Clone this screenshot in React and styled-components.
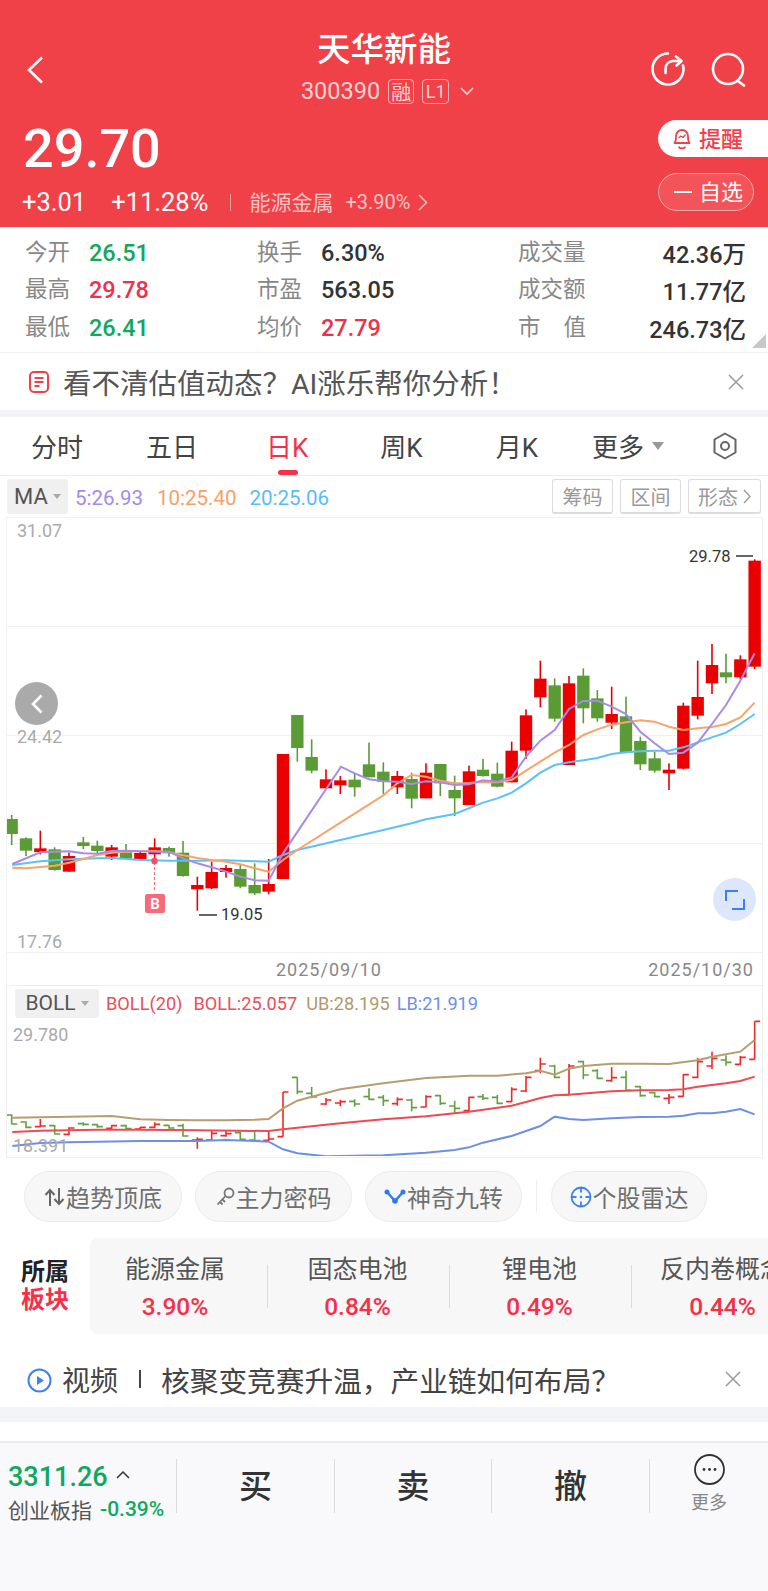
import React from 'react';
import styled, { createGlobalStyle } from 'styled-components';

const GlobalStyle = createGlobalStyle`
  html, body { margin: 0; padding: 0; background: #fff; }
  body { font-family: Roboto, "Noto Sans CJK SC", sans-serif; }
`;

// chart data is in the coordinates of the two half-width crops: x/3 (+384 on the right half), base + y/3
const RED = '#ea0000';
const GREEN = '#5b9b36';

const leftCandles = [
  [35, 885, 897, 942, 975, 'g'], [78, 952, 955, 992, 1008, 'g'], [121, 932, 985, 996, 1003, 'r'],
  [164, 982, 988, 1050, 1052, 'g'], [207, 998, 1008, 1055, 1055, 'r'], [250, 951, 967, 978, 987, 'g'],
  [292, 962, 977, 993, 1002, 'g'], [335, 975, 982, 1010, 1020, 'r'], [378, 972, 997, 1016, 1020, 'g'],
  [421, 993, 999, 1017, 1018, 'r'], [464, 955, 982, 1003, 1015, 'r'], [507, 980, 984, 1000, 1010, 'g'],
  [549, 963, 998, 1068, 1070, 'g'], [592, 1070, 1095, 1108, 1172, 'r'], [635, 1025, 1056, 1105, 1107, 'r'],
  [678, 1035, 1044, 1056, 1073, 'r'], [721, 1035, 1047, 1100, 1105, 'g'], [764, 1030, 1095, 1120, 1125, 'g'],
  [806, 1017, 1092, 1115, 1123, 'r'], [849, 702, 702, 1077, 1077, 'r'], [892, 585, 585, 684, 725, 'g'],
  [935, 658, 711, 752, 760, 'g'], [978, 748, 778, 805, 805, 'r'], [1021, 768, 781, 796, 822, 'r'],
  [1064, 760, 779, 802, 830, 'g'], [1107, 668, 733, 772, 772, 'g'], [1150, 727, 755, 785, 823, 'g'],
];

const rightCandles = [
  [40, 753, 768, 802, 822, 'r'], [83, 758, 777, 836, 865, 'g'], [126, 730, 758, 835, 835, 'r'],
  [169, 732, 732, 790, 828, 'g'], [212, 767, 810, 835, 888, 'g'], [255, 737, 754, 855, 855, 'r'],
  [297, 717, 749, 768, 770, 'g'], [340, 728, 761, 800, 802, 'g'], [383, 665, 692, 787, 787, 'r'],
  [426, 568, 586, 692, 717, 'r'], [469, 422, 476, 532, 562, 'r'], [512, 475, 496, 596, 605, 'g'],
  [555, 468, 490, 735, 735, 'r'], [598, 445, 467, 565, 610, 'g'], [640, 510, 535, 595, 605, 'g'],
  [683, 500, 582, 608, 627, 'r'], [726, 530, 589, 697, 697, 'g'], [769, 650, 663, 733, 750, 'g'],
  [812, 695, 715, 752, 758, 'g'], [855, 730, 749, 760, 810, 'r'], [898, 548, 557, 746, 748, 'r'],
  [941, 422, 531, 587, 598, 'r'], [984, 372, 435, 490, 522, 'r'], [1026, 401, 457, 472, 490, 'g'],
  [1069, 406, 418, 472, 478, 'r'], [1112, 118, 122, 440, 447, 'r'],
];

const ma5 = [
  [[37, 1032], [121, 997], [207, 994], [250, 1000], [292, 1001], [335, 993], [378, 992], [421, 994], [464, 995], [507, 995], [549, 1015], [592, 1030], [635, 1042], [678, 1055], [721, 1070], [764, 1081], [806, 1082], [849, 1000], [1023, 740], [1064, 760], [1107, 778], [1150, 784]],
  [[40, 785], [83, 792], [126, 784], [169, 787], [212, 795], [255, 793], [297, 781], [340, 785], [383, 772], [426, 710], [469, 662], [512, 630], [555, 567], [598, 543], [640, 542], [683, 560], [726, 582], [769, 635], [812, 670], [855, 702], [898, 698], [941, 668], [984, 612], [1026, 555], [1069, 482], [1112, 400]],
];
const ma10 = [
  [[37, 1043], [78, 1045], [121, 1041], [164, 1037], [207, 1028], [250, 1017], [292, 1005], [335, 998], [378, 995], [421, 993], [464, 993], [507, 997], [549, 1006], [592, 1014], [635, 1020], [678, 1025], [721, 1033], [764, 1045], [806, 1055], [849, 1020], [892, 990], [1021, 908], [1150, 826]],
  [[40, 790], [83, 765], [126, 770], [169, 782], [212, 790], [255, 789], [297, 786], [340, 787], [383, 780], [426, 752], [469, 725], [512, 698], [555, 675], [598, 645], [640, 628], [683, 614], [726, 607], [769, 601], [812, 605], [855, 620], [898, 630], [941, 625], [984, 621], [1026, 612], [1069, 592], [1112, 548]],
];
const ma20 = [
  [[37, 1035], [121, 1024], [207, 1018], [292, 1015], [335, 1014], [421, 1020], [507, 1022], [592, 1022], [678, 1021], [764, 1024], [806, 1025], [849, 1005], [892, 990], [1021, 960], [1150, 930]],
  [[83, 910], [126, 898], [212, 882], [297, 848], [340, 835], [383, 818], [426, 790], [469, 758], [512, 735], [555, 727], [598, 721], [640, 714], [683, 702], [726, 697], [769, 694], [812, 692], [855, 692], [898, 682], [941, 667], [984, 652], [1026, 638], [1069, 612], [1112, 582]],
];

const leftBars = [
  [35, 403, 433, 405, 432, 'g'], [78, 424, 445, 426, 442, 'g'], [121, 417, 442, 440, 438, 'r'], [164, 435, 463, 437, 462, 'g'],
  [207, 442, 465, 463, 444, 'r'], [250, 427, 437, 431, 433, 'g'], [292, 431, 443, 434, 440, 'g'], [335, 435, 447, 445, 437, 'r'],
  [378, 434, 448, 437, 446, 'g'], [421, 441, 449, 447, 442, 'r'], [464, 427, 445, 442, 433, 'r'], [507, 435, 446, 436, 444, 'g'],
  [549, 431, 470, 437, 468, 'g'], [592, 472, 506, 480, 478, 'r'], [635, 452, 481, 480, 460, 'r'], [678, 452, 470, 467, 461, 'r'],
  [721, 455, 480, 458, 478, 'g'], [764, 452, 483, 480, 482, 'g'], [806, 450, 483, 481, 477, 'r'], [849, 336, 470, 470, 336, 'r'],
  [892, 292, 342, 292, 335, 'g'], [935, 321, 355, 340, 351, 'g'], [978, 354, 375, 372, 360, 'r'], [1021, 359, 379, 369, 365, 'r'],
  [1064, 358, 380, 364, 372, 'g'], [1107, 325, 360, 350, 358, 'g'], [1150, 345, 378, 352, 362, 'g'],
];
const rightBars = [
  [40, 352, 377, 371, 358, 'r'], [83, 356, 394, 360, 383, 'g'], [126, 346, 382, 381, 350, 'r'], [169, 345, 375, 347, 370, 'g'],
  [212, 362, 398, 378, 385, 'g'], [255, 350, 395, 392, 352, 'r'], [297, 342, 360, 350, 355, 'g'], [340, 345, 372, 352, 370, 'g'],
  [383, 322, 366, 365, 328, 'r'], [426, 288, 337, 333, 292, 'r'], [469, 233, 280, 272, 252, 'r'], [512, 254, 295, 258, 292, 'g'],
  [555, 252, 345, 344, 258, 'r'], [598, 242, 298, 245, 285, 'g'], [640, 268, 298, 272, 295, 'g'], [683, 262, 305, 302, 293, 'r'],
  [726, 272, 332, 292, 331, 'g'], [769, 318, 350, 320, 347, 'g'], [812, 335, 352, 338, 350, 'g'], [855, 342, 372, 355, 352, 'r'],
  [898, 282, 350, 349, 284, 'r'], [941, 234, 295, 292, 245, 'r'], [984, 215, 267, 258, 235, 'r'], [1026, 226, 257, 240, 247, 'g'],
  [1069, 228, 256, 253, 232, 'r'], [1112, 124, 238, 238, 124, 'r'],
];

const ub = [
  [[37, 413], [121, 412], [207, 410], [335, 408], [421, 418], [507, 420], [592, 421], [678, 421], [764, 419], [806, 417], [849, 385], [892, 362], [935, 350], [1021, 328], [1150, 310]],
  [[126, 294], [255, 287], [340, 287], [426, 280], [469, 272], [512, 284], [555, 266], [598, 258], [683, 251], [769, 251], [855, 252], [941, 241], [984, 230], [1069, 215], [1112, 180]],
];
const mid = [
  [[37, 456], [121, 452], [292, 449], [421, 449], [592, 451], [806, 453], [849, 448], [1021, 430], [1150, 418]],
  [[126, 409], [255, 395], [383, 377], [426, 366], [469, 354], [512, 346], [555, 344], [683, 334], [769, 331], [855, 330], [898, 328], [941, 320], [1026, 310], [1069, 303], [1112, 290]],
];
const lb = [
  [[37, 498], [121, 489], [207, 487], [421, 483], [592, 483], [678, 480], [764, 483], [806, 485], [849, 508], [892, 520], [978, 529], [1150, 526]],
  [[126, 518], [212, 510], [255, 502], [297, 488], [383, 468], [469, 438], [512, 410], [555, 417], [598, 420], [683, 415], [769, 411], [855, 410], [898, 407], [941, 400], [984, 400], [1026, 395], [1069, 387], [1112, 403]],
];

const linePoints = ([left, right], base) =>
  [...left.map(([x, y]) => [x / 3, base + y / 3]), ...right.map(([x, y]) => [384 + x / 3, base + y / 3])]
    .map((p) => p.join(','))
    .join(' ');

const Candles = ({ data, offset }) =>
  data.map(([x, hi, top, bottom, lo, c]) => {
    const cx = offset + x / 3;
    return (
      <g key={x} fill={c === 'r' ? RED : GREEN}>
        <rect x={cx - 0.8} y={520 + hi / 3} width="1.6" height={(lo - hi) / 3} />
        <rect x={cx - 6.2} y={520 + top / 3} width="12.4" height={Math.max((bottom - top) / 3, 2)} />
      </g>
    );
  });

const Bars = ({ data, offset }) =>
  data.map(([x, hi, lo, open, close, c]) => {
    const cx = offset + x / 3;
    const y = (v) => 980 + v / 3;
    return (
      <path
        key={x}
        d={`M${cx} ${y(hi)}V${y(lo)}M${cx - 5.5} ${y(open)}H${cx}M${cx} ${y(close)}H${cx + 5.5}`}
        stroke={c === 'r' ? '#ee2a2a' : '#62a040'}
        strokeWidth="1.6"
        fill="none"
      />
    );
  });

const stats = [
  [
    { label: '今开', value: '26.51', color: '#10a860' },
    { label: '换手', value: '6.30%', color: '#333' },
    { label: '成交量', value: '42.36万', color: '#333' },
  ],
  [
    { label: '最高', value: '29.78', color: '#f0304a' },
    { label: '市盈', value: '563.05', color: '#333' },
    { label: '成交额', value: '11.77亿', color: '#333' },
  ],
  [
    { label: '最低', value: '26.41', color: '#10a860' },
    { label: '均价', value: '27.79', color: '#f0304a' },
    { label: ['市', '值'], value: '246.73亿', color: '#333' },
  ],
];

const sectors = [
  { name: '能源金属', pct: '3.90%', width: 177, pad: 7 },
  { name: '固态电池', pct: '0.84%', width: 181, pad: 2 },
  { name: '锂电池', pct: '0.49%', width: 181, pad: 2 },
  { name: '反内卷概念', pct: '0.44%', width: 181, pad: 0 },
];

const tabs = [
  { label: '分时', gap: 63 },
  { label: '五日', gap: 68 },
  { label: '日K', gap: 72, active: true },
  { label: '周K', gap: 73 },
  { label: '月K', gap: 54 },
  { label: '更多', gap: 8 },
];

const CloseIcon = () => (
  <svg width="16" height="16" viewBox="0 0 16 16" fill="none" stroke="#9a9a9a" strokeWidth="1.5">
    <path d="M1 1l14 14M15 1L1 15" />
  </svg>
);

const App = () => {
  return (
    <Page>
      <GlobalStyle />
      <Header>
        <Nav>
          <NavSide>
            <svg width="18" height="28" viewBox="0 0 18 28" fill="none" stroke="#fff" strokeWidth="2.6">
              <path d="M16 1.5L3 14l13 12.5" />
            </svg>
          </NavSide>
          <TitleBlock>
            <Title>天华新能</Title>
            <CodeRow>
              <Code>300390</Code>
              <CodeBadge $w={26} $size={20}>融</CodeBadge>
              <CodeBadge $w={27} $size={18}>L1</CodeBadge>
              <svg width="14" height="9" viewBox="0 0 14 9" fill="none" stroke="#fbd3d3" strokeWidth="1.6">
                <path d="M1 1l6 6 6-6" />
              </svg>
            </CodeRow>
          </TitleBlock>
          <NavIcons>
            <svg width="35" height="35" viewBox="0 0 35 35" fill="none" stroke="#fff" strokeWidth="2.6" strokeLinecap="round" strokeLinejoin="round">
              <path d="M18 1.5A15.5 15.5 0 1 0 33.5 17c0-1.5-.2-2.5-.5-3.5" />
              <path d="M15.5 21v-4c0-4.5 3-7.5 7-8h8.5" />
              <path d="M26 4.5l5.5 4.5-5 4.5" />
            </svg>
            <svg width="35" height="35" viewBox="0 0 35 35" fill="none" stroke="#fff" strokeWidth="2.6" strokeLinecap="round">
              <circle cx="17" cy="17" r="15" />
              <path d="M27.5 29.5l5.5 4" />
            </svg>
          </NavIcons>
        </Nav>
        <Quote>
          <div>
            <Price>29.70</Price>
            <ChangeRow>
              <Change $gap={25}>+3.01</Change>
              <Change $gap={22}>+11.28%</Change>
              <ChangeDivider />
              <SectorName>能源金属</SectorName>
              <SectorChange>+3.90%</SectorChange>
              <svg width="10" height="17" viewBox="0 0 10 17" fill="none" stroke="#f9bcbc" strokeWidth="1.5">
                <path d="M1 1l7.5 7.5L1 16" />
              </svg>
            </ChangeRow>
          </div>
          <QuoteActions>
            <RemindButton>
              <svg width="18" height="21" viewBox="0 0 18 21" fill="none" stroke="#f0404a" strokeWidth="1.8" strokeLinejoin="round">
                <path d="M1.5 15c1.5-1.5 1.5-3 1.5-7a6 6 0 0 1 12 0c0 4 0 5.5 1.5 7z" />
                <path d="M6 18.5a3 2 0 0 0 6 0" />
                <path d="M5.5 10l2.5-2 2 1.5 2.5-3" strokeWidth="1.2" />
              </svg>
              <ActionText>提醒</ActionText>
            </RemindButton>
            <WatchButton>
              <WatchDash />
              <ActionText>自选</ActionText>
            </WatchButton>
          </QuoteActions>
        </Quote>
      </Header>

      <Stats>
        {stats.map((row, i) => (
          <StatRow key={i}>
            {row.map((cell, j) => (
              <StatCell key={j} $col={j}>
                <StatLabel $col={j}>
                  {Array.isArray(cell.label) ? cell.label.map((t) => <span key={t}>{t}</span>) : cell.label}
                </StatLabel>
                <StatValue $color={cell.color}>{cell.value}</StatValue>
              </StatCell>
            ))}
          </StatRow>
        ))}
        <CornerMark />
      </Stats>

      <Banner>
        <svg width="20" height="22" viewBox="0 0 20 22" fill="none" stroke="#f0404a" strokeWidth="2">
          <rect x="1" y="1" width="18" height="20" rx="4" />
          <path d="M5.5 7h9M5.5 11h9M5.5 15h5" />
        </svg>
        <BannerText>看不清估值动态？AI涨乐帮你分析！</BannerText>
        <CloseIcon />
      </Banner>
      <Band $h={7} />

      <Tabs>
        {tabs.map((t) => (
          <Tab key={t.label} $gap={t.gap} $active={t.active}>{t.label}</Tab>
        ))}
        <TabCaret />
        <svg width="26" height="28" viewBox="0 0 26 28" fill="none" stroke="#666" strokeWidth="2">
          <path d="M13 1.5l10.5 6v13L13 26.5l-10.5-6v-13z" strokeLinejoin="round" />
          <circle cx="13" cy="14" r="4" />
        </svg>
      </Tabs>

      <IndicatorRow>
        <IndicatorTag $w={61}>MA<TagCaret /></IndicatorTag>
        <MaValue $color="#a28bea" $gap={14}>5:26.93</MaValue>
        <MaValue $color="#f9a066" $gap={13}>10:25.40</MaValue>
        <MaValue $color="#55bdf8" $gap={0}>20:25.06</MaValue>
        <ToolGroup>
          <ToolButton $w={61}>筹码</ToolButton>
          <ToolButton $w={61}>区间</ToolButton>
          <ToolButton $w={73}>
            形态
            <svg width="8" height="15" viewBox="0 0 8 15" fill="none" stroke="#999" strokeWidth="1.3">
              <path d="M1 1l6 6.5-6 6.5" />
            </svg>
          </ToolButton>
        </ToolGroup>
      </IndicatorRow>

      <ChartFrame>
        <ChartArea>
          <ChartSvg width="755" height="436" viewBox="7 517 755 436">
            <path d="M7 517.5H762M7 626.5H762M7 735.5H762M7 843.5H762M7 952.5H762" stroke="#f1f1f1" strokeWidth="1.2" />
            <Candles data={leftCandles} offset={0} />
            <Candles data={rightCandles} offset={384} />
            <polyline points={linePoints(ma20, 520)} fill="none" stroke="#5cc1f7" strokeWidth="2" />
            <polyline points={linePoints(ma10, 520)} fill="none" stroke="#f9a46b" strokeWidth="2" />
            <polyline points={linePoints(ma5, 520)} fill="none" stroke="#a78bea" strokeWidth="2" />
            <path d="M154.5 862V892" stroke="#f8697a" strokeWidth="1.2" strokeDasharray="3 2" />
            <circle cx="154.5" cy="861" r="3.2" fill="#f0505f" />
            <path d="M199 915H217M736 556H753" stroke="#333" strokeWidth="1.6" />
          </ChartSvg>
          <AxisLabel $top={13}>31.07</AxisLabel>
          <AxisLabel $top={219}>24.42</AxisLabel>
          <AxisLabel $top={424}>17.76</AxisLabel>
          <PriceMark $left={214} $top={387}>19.05</PriceMark>
          <PriceMark $left={682} $top={29}>29.78</PriceMark>
          <TradeMark>B</TradeMark>
          <RoundButton $left={8} $top={165} $bg="#aaaaaa">
            <svg width="12" height="20" viewBox="0 0 12 20" fill="none" stroke="#fff" strokeWidth="2.6">
              <path d="M10.5 1.5L2 10l8.5 8.5" />
            </svg>
          </RoundButton>
          <RoundButton $left={706} $top={361} $bg="#dce7fb">
            <svg width="20" height="20" viewBox="0 0 20 20" fill="none" stroke="#3d7ff0" strokeWidth="2">
              <path d="M1 11V1h12M19 9v10H7" />
            </svg>
          </RoundButton>
        </ChartArea>
        <DateRow>
          <DateText>2025/09/10</DateText>
          <DateText>2025/10/30</DateText>
        </DateRow>
      </ChartFrame>

      <BollFrame>
        <BollHead>
          <IndicatorTag $w={84} $h={29} $size={21}>BOLL<TagCaret /></IndicatorTag>
          <BollValue $color="#e8505a" $gap={11}>BOLL(20)</BollValue>
          <BollValue $color="#e8505a" $gap={9}>BOLL:25.057</BollValue>
          <BollValue $color="#b3976d" $gap={7}>UB:28.195</BollValue>
          <BollValue $color="#6e8fe6" $gap={0}>LB:21.919</BollValue>
        </BollHead>
        <BollPlot>
          <ChartSvg width="755" height="138" viewBox="7 1018 755 138">
            <Bars data={leftBars} offset={0} />
            <Bars data={rightBars} offset={384} />
            <polyline points={linePoints(ub, 980)} fill="none" stroke="#b89c72" strokeWidth="2" />
            <polyline points={linePoints(mid, 980)} fill="none" stroke="#ee4a52" strokeWidth="2" />
            <polyline points={linePoints(lb, 980)} fill="none" stroke="#6e8fe6" strokeWidth="2" />
          </ChartSvg>
          <BollAxis $top={16}>29.780</BollAxis>
          <BollAxis $top={127}>18.391</BollAxis>
        </BollPlot>
      </BollFrame>

      <ChipRow>
        <Chip $w={158}>
          <svg width="21" height="18" viewBox="0 0 21 18" fill="none" stroke="#666" strokeWidth="2">
            <path d="M6 18V2M1.5 7L6 2l4.5 5M15 0v16M10.5 11l4.5 5 4.5-5" />
          </svg>
          趋势顶底
        </Chip>
        <Chip $w={157}>
          <svg width="19" height="19" viewBox="0 0 19 19" fill="none" stroke="#777" strokeWidth="1.8">
            <circle cx="13" cy="6" r="4.5" />
            <path d="M9.5 9L1.5 17.5M4 15l2.5 2.5M6.5 12.5L9 15" />
          </svg>
          主力密码
        </Chip>
        <Chip $w={157}>
          <svg width="22" height="15" viewBox="0 0 22 15" fill="none" stroke="#2f78ee" strokeWidth="2.4">
            <path d="M3 3l8 9 8-9" />
            <circle cx="3" cy="3" r="2.5" fill="#2f78ee" stroke="none" />
            <circle cx="19" cy="3" r="2.5" fill="#2f78ee" stroke="none" />
            <circle cx="11" cy="12" r="2.8" fill="#2f78ee" stroke="none" />
          </svg>
          神奇九转
        </Chip>
        <ChipDivider />
        <Chip $w={156}>
          <svg width="22" height="22" viewBox="0 0 22 22" fill="none" stroke="#3d82ef" strokeWidth="1.8">
            <circle cx="11" cy="11" r="9.5" />
            <path d="M11 1.5v5M11 15.5v5M1.5 11h5M15.5 11h5" />
            <circle cx="11" cy="11" r="1.3" fill="#3d82ef" stroke="none" />
          </svg>
          个股雷达
        </Chip>
      </ChipRow>

      <SectorRow>
        <SectorTitle>
          <span>所属</span>
          <SectorTitleRed>板块</SectorTitleRed>
        </SectorTitle>
        <SectorPanel>
          {sectors.map((s, i) => (
            <React.Fragment key={s.name}>
              {i > 0 && <SectorDivider />}
              <SectorItem $w={s.width} $pad={s.pad}>
                <SectorItemName>{s.name}</SectorItemName>
                <SectorItemPct>{s.pct}</SectorItemPct>
              </SectorItem>
            </React.Fragment>
          ))}
        </SectorPanel>
      </SectorRow>

      <NewsRow>
        <svg width="25" height="25" viewBox="0 0 25 25">
          <circle cx="12.5" cy="12.5" r="11" fill="none" stroke="#3d82ef" strokeWidth="2" />
          <path d="M10 8l7 4.5-7 4.5z" fill="#3d82ef" />
        </svg>
        <NewsLabel>视频</NewsLabel>
        <NewsBar />
        <NewsText>核聚变竞赛升温，产业链如何布局？</NewsText>
        <CloseIcon />
      </NewsRow>
      <Band $h={15} />
      <Spacer />

      <BottomBar>
        <IndexCell>
          <IndexLine>
            <IndexValue>3311.26</IndexValue>
            <svg width="14" height="9" viewBox="0 0 14 9" fill="none" stroke="#333" strokeWidth="1.5">
              <path d="M1 8l6-6 6 6" />
            </svg>
          </IndexLine>
          <IndexSubLine>
            <IndexName>创业板指</IndexName>
            <IndexChange>-0.39%</IndexChange>
          </IndexSubLine>
        </IndexCell>
        <TradeCell $w={158}>买</TradeCell>
        <TradeCell $w={157}>卖</TradeCell>
        <TradeCell $w={158}>撤</TradeCell>
        <MoreCell>
          <svg width="31" height="31" viewBox="0 0 31 31" fill="none">
            <circle cx="15.5" cy="15.5" r="14.5" stroke="#333" strokeWidth="1.8" />
            <circle cx="10" cy="15.5" r="1.4" fill="#333" />
            <circle cx="15.5" cy="15.5" r="1.4" fill="#333" />
            <circle cx="21" cy="15.5" r="1.4" fill="#333" />
          </svg>
          <MoreLabel>更多</MoreLabel>
        </MoreCell>
      </BottomBar>
    </Page>
  );
};

const Page = styled.div`
  width: 768px;
  height: 1591px;
  overflow: hidden;
  background: #fff;
  display: flex;
  flex-direction: column;
`;

const Header = styled.header`
  height: 227px;
  background: #f14148;
  color: #fff;
  flex: none;
`;
const Nav = styled.div`
  height: 104px;
  padding: 30px 24px 0 24px;
  box-sizing: border-box;
  display: grid;
  grid-template-columns: 1fr auto 1fr;
`;
const NavSide = styled.div`
  padding: 26px 0 0 2px;
`;
const TitleBlock = styled.div`
  display: flex;
  flex-direction: column;
  align-items: center;
`;
const Title = styled.div`
  font-size: 33.5px;
  line-height: 40px;
  font-weight: 500;
`;
const CodeRow = styled.div`
  display: flex;
  align-items: center;
  height: 26px;
  margin-top: 8px;
  margin-left: 7px;
  svg { margin-left: 3px; }
`;
const Code = styled.span`
  font-size: 23.5px;
  color: #fbd3d3;
  margin-right: 8px;
`;
const CodeBadge = styled.span`
  width: ${(p) => p.$w}px;
  height: 25px;
  box-sizing: border-box;
  margin-right: 8px;
  border: 1.5px solid #f8b4b4;
  border-radius: 4px;
  color: #fbd3d3;
  font-size: ${(p) => p.$size}px;
  display: flex;
  align-items: center;
  justify-content: center;
`;
const NavIcons = styled.div`
  display: flex;
  justify-content: flex-end;
  gap: 26px;
  padding-top: 22px;
  margin-right: -2px;
`;
const Quote = styled.div`
  height: 123px;
  display: flex;
  justify-content: space-between;
  padding-left: 22px;
`;
const Price = styled.div`
  font-size: 54px;
  line-height: 60px;
  height: 60px;
  margin-top: 15px;
  margin-left: 1px;
  font-weight: 500;
`;
const ChangeRow = styled.div`
  display: flex;
  align-items: center;
  height: 30px;
  margin-top: 8px;
`;
const Change = styled.span`
  font-size: 25.5px;
  margin-right: ${(p) => p.$gap}px;
`;
const ChangeDivider = styled.i`
  width: 1px;
  height: 17px;
  background: #f8a5a5;
  margin-right: 18px;
`;
const SectorName = styled.span`
  font-size: 21px;
  color: #f9c4c4;
  margin-right: 12px;
  margin-top: -3px;
`;
const SectorChange = styled.span`
  font-size: 20px;
  color: #f9c4c4;
  margin-right: 8px;
`;
const QuoteActions = styled.div`
  width: 110px;
  padding-top: 16px;
  display: flex;
  flex-direction: column;
  gap: 16px;
`;
const RemindButton = styled.div`
  height: 37px;
  background: #fff;
  border-radius: 19px 0 0 19px;
  color: #f0404a;
  font-size: 22px;
  font-weight: 500;
  display: flex;
  align-items: center;
  padding-left: 15px;
  gap: 8px;
`;
const WatchButton = styled.div`
  width: 96px;
  height: 38px;
  box-sizing: border-box;
  background: rgba(255, 255, 255, 0.1);
  border: 1px solid #f9a9a9;
  border-radius: 19px;
  font-size: 22px;
  display: flex;
  align-items: center;
  padding-left: 15px;
  gap: 7px;
`;
const ActionText = styled.span`
  margin-top: -4px;
`;
const WatchDash = styled.i`
  width: 18px;
  height: 2px;
  background: #fff;
`;

const Stats = styled.section`
  position: relative;
  height: 126px;
  padding: 6px 22px 0 25px;
  box-sizing: border-box;
  border-bottom: 1px solid #efefef;
  flex: none;
`;
const StatRow = styled.div`
  display: grid;
  grid-template-columns: 232px 261px 1fr;
  height: 37.5px;
  align-items: center;
`;
const StatCell = styled.div`
  display: flex;
  align-items: center;
  justify-content: ${(p) => (p.$col === 2 ? 'space-between' : 'flex-start')};
`;
const StatLabel = styled.div`
  width: ${(p) => (p.$col === 2 ? 68 : 64)}px;
  margin-top: -4px;
  font-size: 22.5px;
  color: #888;
  display: flex;
  justify-content: space-between;
`;
const StatValue = styled.div`
  padding-top: 2px;
  font-size: 23.5px;
  font-weight: 500;
  color: ${(p) => p.$color};
`;
const CornerMark = styled.i`
  position: absolute;
  right: 2px;
  bottom: 4px;
  width: 0;
  height: 0;
  border-left: 14px solid transparent;
  border-bottom: 14px solid #c8c8c8;
`;

const Banner = styled.div`
  height: 57px;
  padding: 0 24px 0 29px;
  box-sizing: border-box;
  display: flex;
  align-items: center;
  flex: none;
`;
const BannerText = styled.div`
  flex: 1;
  margin: 0 0 1px 14px;
  font-size: 28.5px;
  color: #555;
`;
const Band = styled.div`
  height: ${(p) => p.$h}px;
  background: #f3f4f8;
  flex: none;
`;

const Tabs = styled.nav`
  height: 59px;
  padding-left: 31px;
  box-sizing: border-box;
  border-bottom: 1px solid #ececec;
  display: flex;
  align-items: center;
  flex: none;
`;
const Tab = styled.span`
  position: relative;
  margin-right: ${(p) => p.$gap}px;
  padding-top: 4px;
  line-height: 36px;
  font-size: 26px;
  color: ${(p) => (p.$active ? '#f5304a' : '#444')};
  &::after {
    content: '';
    display: ${(p) => (p.$active ? 'block' : 'none')};
    position: absolute;
    left: 12px;
    top: 44px;
    width: 20px;
    height: 5px;
    border-radius: 3px;
    background: #f5304a;
  }
`;
const TabCaret = styled.i`
  margin-right: 48px;
  border-left: 6.5px solid transparent;
  border-right: 6.5px solid transparent;
  border-top: 8px solid #999;
`;

const IndicatorRow = styled.div`
  height: 41px;
  padding: 3px 7px 0 7px;
  box-sizing: border-box;
  display: flex;
  align-items: flex-start;
  flex: none;
`;
const IndicatorTag = styled.div`
  width: ${(p) => p.$w}px;
  height: ${(p) => p.$h || 35}px;
  margin-right: 7px;
  background: #f0f0f0;
  border-radius: 3px;
  color: #555;
  font-size: ${(p) => p.$size || 22}px;
  display: flex;
  align-items: center;
  justify-content: center;
  gap: 5px;
  flex: none;
`;
const TagCaret = styled.i`
  border-left: 4px solid transparent;
  border-right: 4px solid transparent;
  border-top: 5px solid #aaa;
`;
const MaValue = styled.span`
  margin-right: ${(p) => p.$gap}px;
  font-size: 20.5px;
  line-height: 39px;
  color: ${(p) => p.$color};
`;
const ToolGroup = styled.div`
  margin-left: auto;
  display: flex;
  gap: 7px;
`;
const ToolButton = styled.div`
  width: ${(p) => p.$w}px;
  height: 35px;
  box-sizing: border-box;
  border: 1px solid #dcdcdc;
  border-bottom-width: 2px;
  border-radius: 3px;
  color: #999;
  font-size: 20px;
  display: flex;
  align-items: center;
  justify-content: center;
  gap: 5px;
`;

const ChartFrame = styled.div`
  margin: 0 5px 0 6px;
  border-left: 1px solid #f1f1f1;
  border-right: 1px solid #f1f1f1;
  flex: none;
`;
const ChartArea = styled.div`
  position: relative;
  height: 436px;
`;
const ChartSvg = styled.svg`
  display: block;
`;
const AxisLabel = styled.span`
  position: absolute;
  left: 10px;
  top: ${(p) => p.$top}px;
  transform: translateY(-50%);
  font-size: 18px;
  color: #aaa;
`;
const PriceMark = styled.span`
  position: absolute;
  left: ${(p) => p.$left}px;
  top: ${(p) => p.$top}px;
  line-height: 22px;
  font-size: 16.5px;
  color: #333;
`;
const TradeMark = styled.span`
  position: absolute;
  left: 138px;
  top: 377px;
  width: 20px;
  height: 19px;
  background: #f8697a;
  border-radius: 2px;
  color: #fff;
  font-size: 15px;
  font-weight: 700;
  display: flex;
  align-items: center;
  justify-content: center;
`;
const RoundButton = styled.div`
  position: absolute;
  left: ${(p) => p.$left}px;
  top: ${(p) => p.$top}px;
  width: 43px;
  height: 43px;
  border-radius: 50%;
  background: ${(p) => p.$bg};
  display: flex;
  align-items: center;
  justify-content: center;
`;
const DateRow = styled.div`
  height: 32px;
  padding: 0 8px 0 269px;
  display: flex;
  justify-content: space-between;
`;
const DateText = styled.span`
  line-height: 34px;
  font-size: 18px;
  letter-spacing: 1px;
  color: #888;
`;

const BollFrame = styled.div`
  margin: 0 5px 0 6px;
  height: 173px;
  box-sizing: border-box;
  border: 1px solid #eeeeee;
  flex: none;
`;
const BollHead = styled.div`
  height: 32px;
  padding: 2px 0 0 8px;
  box-sizing: border-box;
  display: flex;
  align-items: center;
`;
const BollValue = styled.span`
  margin-right: ${(p) => p.$gap}px;
  font-size: 18.2px;
  color: ${(p) => p.$color};
`;
const BollPlot = styled.div`
  position: relative;
  height: 138px;
`;
const BollAxis = styled.span`
  position: absolute;
  left: 6px;
  top: ${(p) => p.$top}px;
  transform: translateY(-50%);
  font-size: 18px;
  color: #aaa;
`;

const ChipRow = styled.div`
  margin-top: 13px;
  padding-left: 24px;
  height: 51px;
  display: flex;
  align-items: center;
  gap: 13px;
  flex: none;
`;
const Chip = styled.div`
  width: ${(p) => p.$w}px;
  height: 51px;
  box-sizing: border-box;
  background: #f7f7f7;
  border: 1px solid #ebebeb;
  border-radius: 26px;
  color: #707070;
  font-size: 24px;
  display: flex;
  align-items: center;
  justify-content: center;
  gap: 1px;
`;
const ChipDivider = styled.i`
  width: 1px;
  height: 33px;
  background: #eeeeee;
  margin: 0 1px;
`;

const SectorRow = styled.div`
  margin-top: 16px;
  height: 96px;
  display: flex;
  flex: none;
`;
const SectorTitle = styled.div`
  width: 90px;
  padding: 20px 0 0 21px;
  box-sizing: border-box;
  font-size: 24px;
  line-height: 28px;
  font-weight: 700;
  color: #222;
  display: flex;
  flex-direction: column;
  flex: none;
`;
const SectorTitleRed = styled.span`
  color: #f5304a;
`;
const SectorPanel = styled.div`
  flex: 1;
  background: #f7f7f7;
  border-radius: 8px 0 0 8px;
  display: flex;
  align-items: center;
  overflow: hidden;
`;
const SectorDivider = styled.i`
  width: 1px;
  height: 43px;
  background: #dcdcdc;
  flex: none;
`;
const SectorItem = styled.div`
  width: ${(p) => p.$w}px;
  margin-top: 4px;
  padding-right: ${(p) => p.$pad}px;
  box-sizing: border-box;
  flex: none;
  display: flex;
  flex-direction: column;
  align-items: center;
  white-space: nowrap;
`;
const SectorItemName = styled.span`
  font-size: 25px;
  line-height: 34px;
  color: #555;
`;
const SectorItemPct = styled.span`
  margin-top: 3px;
  font-size: 24.5px;
  line-height: 34px;
  font-weight: 500;
  color: #f5304a;
`;

const NewsRow = styled.div`
  height: 73px;
  padding: 17px 27px 0 27px;
  box-sizing: border-box;
  display: flex;
  align-items: center;
  flex: none;
  svg:first-child { margin-top: 3px; }
`;
const NewsLabel = styled.span`
  margin-left: 10px;
  font-size: 28px;
  color: #444;
`;
const NewsBar = styled.i`
  width: 2px;
  height: 18px;
  margin: 0 20px 0 21px;
  background: #444;
`;
const NewsText = styled.span`
  flex: 1;
  font-size: 28.7px;
  color: #444;
  white-space: nowrap;
`;
const Spacer = styled.div`
  height: 21px;
  box-sizing: border-box;
  border-bottom: 2px solid #ececef;
  flex: none;
`;

const BottomBar = styled.footer`
  flex: 1;
  background: #f9f9fb;
  padding-top: 16px;
  display: flex;
  align-items: flex-start;
`;
const IndexCell = styled.div`
  width: 176px;
  height: 54px;
  padding-left: 8px;
  box-sizing: border-box;
  flex: none;
`;
const IndexLine = styled.div`
  display: flex;
  align-items: center;
  height: 36px;
  white-space: nowrap;
  svg { margin-left: 8px; margin-bottom: 6px; }
`;
const IndexSubLine = styled(IndexLine)`
  margin-top: -4px;
`;
const IndexValue = styled.span`
  font-size: 27px;
  font-weight: 500;
  color: #10a860;
`;
const IndexName = styled.span`
  font-size: 21px;
  color: #555;
`;
const IndexChange = styled.span`
  margin-left: 8px;
  font-size: 21px;
  font-weight: 500;
  color: #10a860;
`;
const TradeCell = styled.div`
  width: ${(p) => p.$w}px;
  height: 54px;
  padding-bottom: 4px;
  box-sizing: border-box;
  border-left: 1px solid #dcdcdc;
  font-size: 33px;
  font-weight: 500;
  color: #333;
  display: flex;
  align-items: center;
  justify-content: center;
  flex: none;
`;
const MoreCell = styled.div`
  flex: 1;
  height: 54px;
  border-left: 1px solid #dcdcdc;
  display: flex;
  flex-direction: column;
  align-items: center;
  svg { margin-top: -5px; flex: none; }
`;
const MoreLabel = styled.span`
  font-size: 18px;
  line-height: 30px;
  margin-top: 3px;
  color: #888;
  flex: none;
`;

export default App;
